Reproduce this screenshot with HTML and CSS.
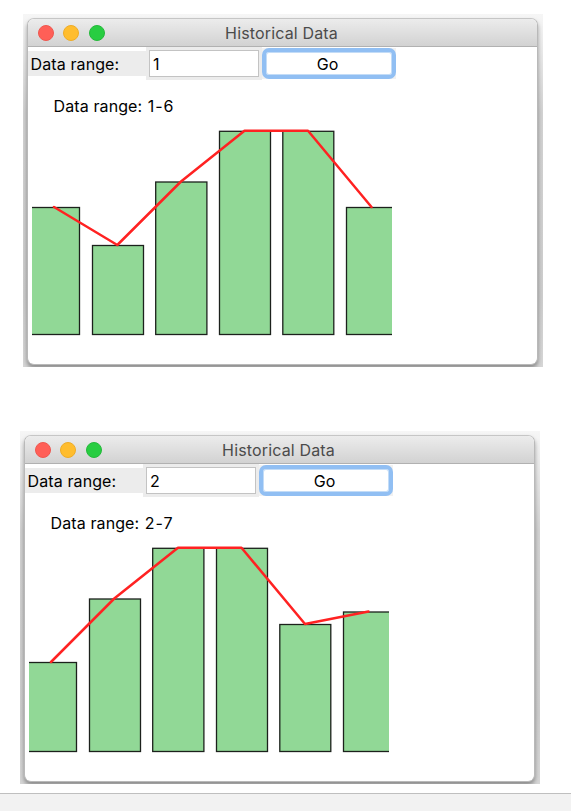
FILE: index.html
```
<!DOCTYPE html>
<html lang="en">
<head>
    <meta charset="UTF-8">
    <meta name="viewport" content="width=device-width, initial-scale=1.0">
    <title>Historical Data</title>
    <link rel="stylesheet" href="styles.css">
</head>
<body>
    <main class="page">
        <section class="shot">
            <div class="window">
                <header class="titlebar">
                    <span class="dot red"></span>
                    <span class="dot yellow"></span>
                    <span class="dot green"></span>
                    <h1 class="title">Historical Data</h1>
                </header>
                <form class="controls" onsubmit="return false">
                    <label class="label" for="range-a">Data range:</label>
                    <div class="field"><input class="entry" id="range-a" type="text" value="1"></div>
                    <div class="action"><button class="go">Go</button></div>
                </form>
                <p class="caption">Data range: <span class="range">1-6</span></p>
                <svg class="chart" width="360" height="220" viewBox="0 0 360 220">
                    <g class="bars">
                        <rect x="-3.5" y="87.5" width="51" height="127"/>
                        <rect x="60.5" y="125.5" width="51" height="89"/>
                        <rect x="123.7" y="62" width="51.2" height="152.5"/>
                        <rect x="187.5" y="11.3" width="51" height="203.2"/>
                        <rect x="250.8" y="11.3" width="51" height="203.2"/>
                        <rect x="314.5" y="87.5" width="51" height="127"/>
                    </g>
                    <polyline class="trend" points="22,87 85.3,125 149,61.5 212.5,10.8 276,10.8 339.5,87"/>
                </svg>
            </div>
        </section>

        <section class="shot second">
            <div class="window">
                <header class="titlebar">
                    <span class="dot red"></span>
                    <span class="dot yellow"></span>
                    <span class="dot green"></span>
                    <h1 class="title">Historical Data</h1>
                </header>
                <form class="controls" onsubmit="return false">
                    <label class="label" for="range-b">Data range:</label>
                    <div class="field"><input class="entry" id="range-b" type="text" value="2"></div>
                    <div class="action"><button class="go">Go</button></div>
                </form>
                <p class="caption">Data range: <span class="range">2-7</span></p>
                <svg class="chart" width="360" height="220" viewBox="0 0 360 220">
                    <g class="bars">
                        <rect x="-3.5" y="125.5" width="51" height="89"/>
                        <rect x="60.5" y="62" width="51" height="152.5"/>
                        <rect x="123.7" y="11.3" width="51.2" height="203.2"/>
                        <rect x="187.5" y="11.3" width="51" height="203.2"/>
                        <rect x="250.8" y="87.5" width="51" height="127"/>
                        <rect x="314.5" y="75" width="51" height="139.5"/>
                    </g>
                    <polyline class="trend" points="22,125 85.3,61.5 149,10.8 212.5,10.8 276,87 339.5,74.5"/>
                </svg>
            </div>
        </section>
    </main>
    <footer class="footer"></footer>
</body>
</html>
```
FILE: styles.css
```
* {
    box-sizing: border-box;
}
body,
html {
    height: 100%;
    margin: 0;
    padding: 0;
    background-color: #fff;
}
body {
    font-family: Inter, 'Liberation Sans', sans-serif;
    font-size: 16px;
    letter-spacing: 0.1px;
    color: #000;
    display: flex;
    flex-direction: column;
    overflow: hidden;
}
.page {
    height: 793px;
    flex: none;
    padding: 14px 0 0 23px;
}
.footer {
    flex: 1;
    background-color: #f2f2f2;
    border-top: 1px solid #bfbfbf;
}

/* grey area around each window is its drop shadow */
.shot {
    width: 520px;
    height: 353px;
    padding: 4px 5px 2px 4px;
    background: linear-gradient(#f6f6f6, #ececec 8%, #d2d2d2 28%, #cdcdcd 80%, #d6d6d6);
    overflow: hidden;
}
.shot.second {
    margin: 64px 0 0 -3px;
}
.window {
    height: 347px;
    border: 1px solid #b9b9b9;
    border-top-color: #c6c6c6;
    border-radius: 7px;
    background-color: #fff;
    box-shadow: 0 3px 4px rgba(0, 0, 0, 0.35);
    overflow: hidden;
}
.titlebar {
    position: relative;
    display: flex;
    align-items: center;
    gap: 9.4px;
    height: 28px;
    padding-left: 10px;
    background: linear-gradient(#ececec, #d2d2d2);
    border-bottom: 1px solid #b1b1b1;
}
.dot {
    width: 16px;
    height: 16px;
    margin-top: 1px;
    border-radius: 50%;
}
.red {
    background-color: #ff5f57;
    border: 1px solid #ee574f;
}
.yellow {
    background-color: #ffbd2e;
    border: 1px solid #eeac27;
}
.green {
    background-color: #28cd41;
    border: 1px solid #25b93b;
}
/* centred on the whole bar, over the buttons' row */
.title {
    position: absolute;
    left: 0;
    right: 2px;
    top: 1px;
    margin: 0;
    font-size: 16px;
    line-height: 26px;
    font-weight: 400;
    letter-spacing: 0.15px;
    text-align: center;
    color: #4b4b4b;
}

.controls {
    display: flex;
    align-items: center;
    height: 33px;
}
.label {
    width: 118px;
    height: 25px;
    padding-left: 2.6px;
    line-height: 26px;
    background-color: #ececec;
}
.field {
    width: 116px;
    height: 33px;
    padding: 3px;
    background-color: #ececec;
}
.entry {
    display: block;
    width: 110px;
    height: 27px;
    padding: 1px 3px 0;
    border: 1px solid #c3c3c3;
    background-color: #fff;
    font: inherit;
    color: #000;
    outline: none;
}
.action {
    width: 134px;
    height: 31px;
    background-color: #f1f1f1;
}
.go {
    display: block;
    width: 134px;
    height: 31px;
    padding: 0 3px 0 0;
    border: 4px solid #91bff3;
    border-radius: 7px;
    background-color: #fff;
    box-shadow: inset 0 0 0 1px #c3dcf7;
    font: inherit;
    color: #000;
}
.caption {
    height: 40px;
    margin: 0;
    padding: 14px 0 0 25.6px;
    line-height: 24px;
}
.range {
    margin-left: 1px;
    letter-spacing: 0.9px;
}
.chart {
    display: block;
    margin-left: 4px;
    overflow: hidden;
}
.bars rect {
    fill: #91d896;
    stroke: #1c211c;
    stroke-width: 1.3;
}
.trend {
    fill: none;
    stroke: #ff2222;
    stroke-width: 2.5;
    stroke-linecap: round;
    stroke-linejoin: round;
}
```
